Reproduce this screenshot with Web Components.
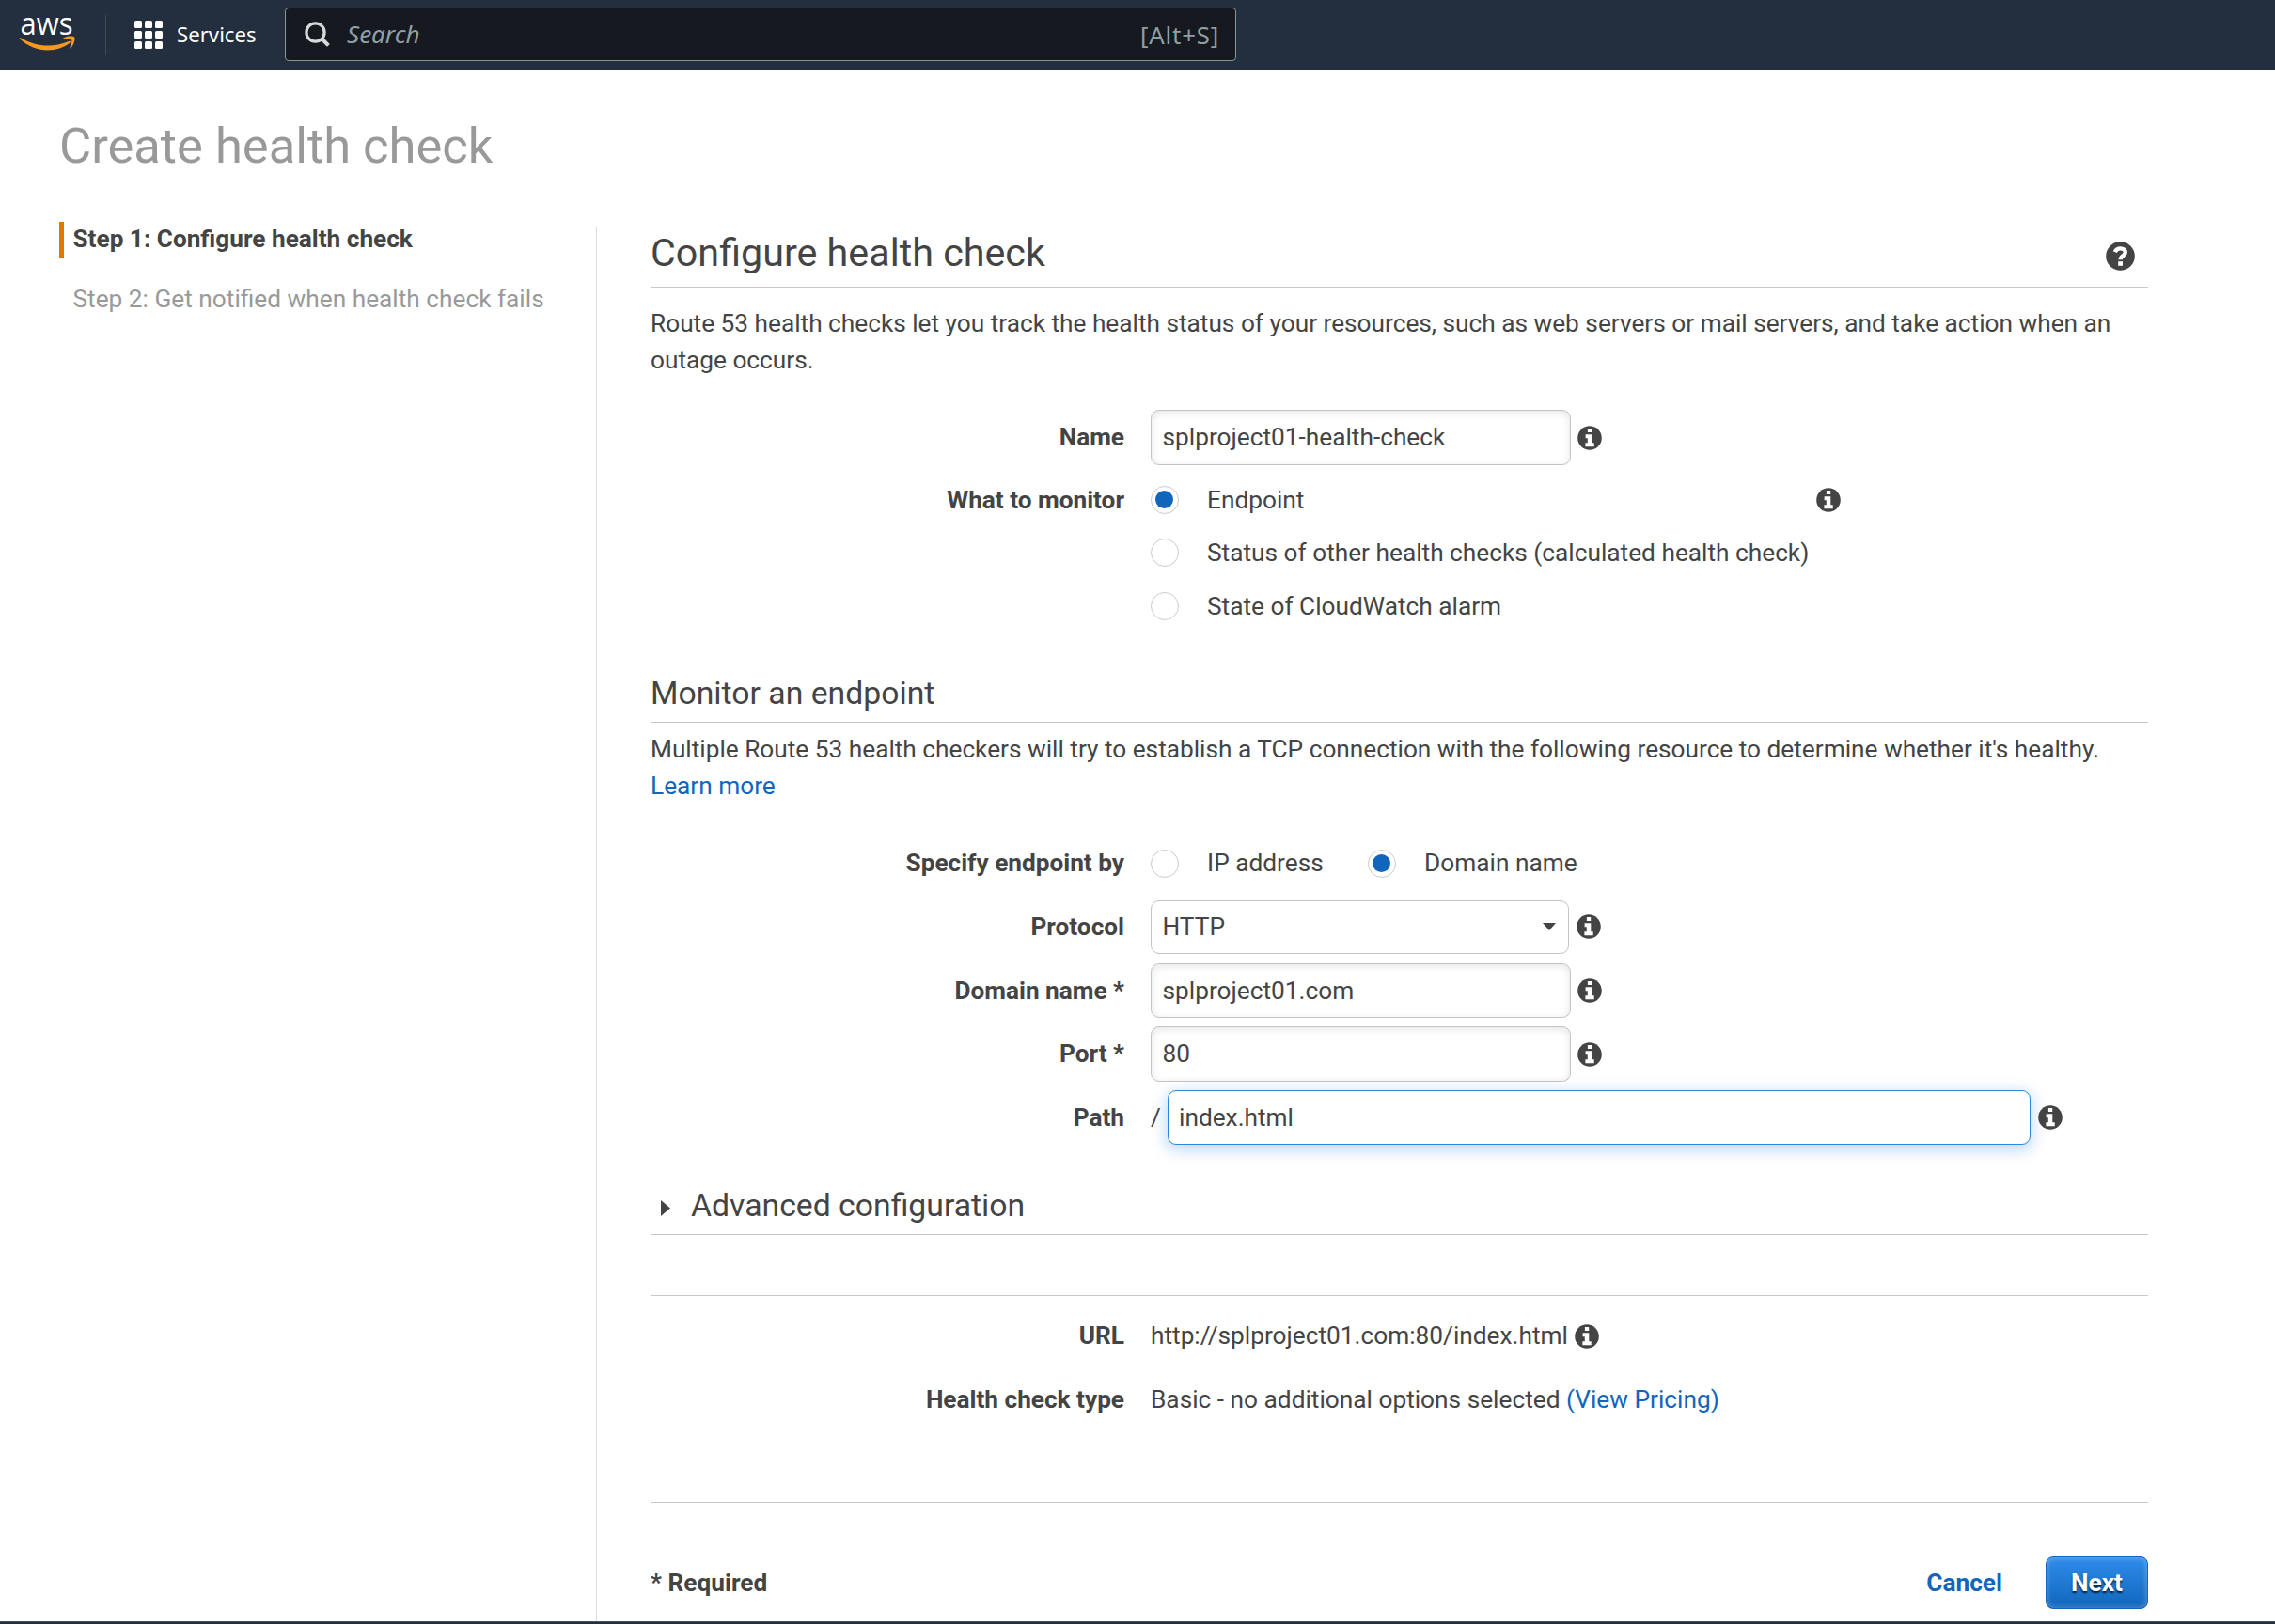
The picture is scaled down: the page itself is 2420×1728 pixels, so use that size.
<!DOCTYPE html>
<html lang="en">
<head>
<meta charset="utf-8">
<title>Create health check</title>
<style>
html, body { margin: 0; height: 100%; }
body { background: #fff; color: #444; font: 26.25px/39px Roboto, "Liberation Sans", sans-serif; overflow: hidden; }
</style>
</head>
<body>
<health-check-page></health-check-page>
<script>
const define = (name, html) => {
  const template = document.createElement('template');
  template.innerHTML = html;
  customElements.define(name, class extends HTMLElement {
    constructor() {
      super();
      this.attachShadow({ mode: 'open' }).append(template.content.cloneNode(true));
    }
  });
};

define('info-icon', `
<style>:host{display:block;width:26px;height:26px;flex:none}svg{display:block;width:100%;height:100%}</style>
<svg viewBox="0 0 26 26"><circle cx="13" cy="13" r="12.8" fill="#444"/><path fill="#fff" d="M10.9 2.9h4.3v4h-4.3zM8.6 9.3h6.7v9h2.4v3.9H8.4v-3.9h2.4v-5H8.6z"/></svg>`);

define('help-icon', `
<style>:host{display:block;width:31px;height:31px;flex:none}svg{display:block}</style>
<svg width="31" height="31" viewBox="0 0 31 31"><circle cx="15.5" cy="15.5" r="15.3" fill="#444"/><path fill="none" stroke="#fff" stroke-width="4.4" d="M9.8 11.1C10.8 8.8 13 7.4 15.6 7.4c3 0 5.2 1.6 5.2 4.2 0 3.8-5.2 3.7-5.2 7.7"/><path fill="#fff" d="M13.2 21.2h4.8v4.6h-4.8z"/></svg>`);

define('radio-option', `
<style>
:host{display:flex;align-items:center;height:30px;white-space:nowrap}
i{box-sizing:border-box;width:30px;height:30px;border:1.5px solid #ccc;border-radius:50%;background:#fff;flex:none;padding:4px}
:host([checked]) i::before{content:"";display:block;width:19px;height:19px;border-radius:50%;background:#1166bb}
span{margin-left:30px}
</style><i></i><span><slot></slot></span>`);

define('text-field', `
<style>
:host{box-sizing:border-box;display:flex;align-items:center;width:447px;height:59px;padding-left:11.5px;border:1.5px solid #c4c4c4;border-radius:9px;background:#fff;box-shadow:inset 0 2px 8px rgba(0,0,0,.11);flex:none}
:host([focused]){width:918px;height:58px;padding-left:11px;border-color:#2e86de;box-shadow:0 4px 16px 2px rgba(46,134,222,.3)}
:host([select]){width:445px;height:57px;box-shadow:none;justify-content:space-between;padding-right:13px}
svg{display:none}:host([select]) svg{display:block}
</style><span><slot></slot></span><svg width="14" height="8" viewBox="0 0 14 8"><path d="M0 0h14L7 8z" fill="#444"/></svg>`);

define('form-row', `
<style>
:host{display:flex;align-items:center;height:67px}
.label{width:504px;margin-right:28px;text-align:right;font-weight:700;font-size:26.2px;flex:none}
.value{display:flex;align-items:center}
</style><div class="label"><slot name="label"></slot></div><div class="value"><slot></slot></div>`);

define('section-heading', `
<style>
:host{box-sizing:border-box;display:flex;align-items:center;border-bottom:1px solid #c8c8c8;font-size:33.75px;height:64px;padding-top:2px}
:host([large]){font-size:41.25px;height:69px;padding-top:0}
</style><slot></slot>`);

define('top-bar', `
<style>
:host{box-sizing:border-box;display:flex;align-items:center;height:75px;padding-left:20px;background:#232f3e;border-bottom:1px solid #48535f;font-family:"Noto Sans","Open Sans",sans-serif}
svg{display:block;flex:none}
.rule{width:1px;height:43px;background:#414750;margin:0 30px 0 31px}
.services{font-size:22.2px;color:#fff;margin-left:15px;width:115px;padding-bottom:2px}
.search{box-sizing:border-box;display:flex;align-items:center;width:1012px;height:57px;border:1px solid #879596;border-radius:4px;background:#161920;color:#8fa0a4;padding:0 17px 0 20px;margin-bottom:1px}
.hint{font-style:italic;margin-left:18px;flex:1;font-size:26px}
.key{font-size:25.8px;letter-spacing:.8px;padding-top:1px}
</style>
<svg width="61" height="74" viewBox="0 -15 61 74" overflow="visible"><text x="1.5" y="22" textLength="56" lengthAdjust="spacingAndGlyphs" font-family="Open Sans" font-weight="500" font-size="33" fill="#fff">aws</text><path fill="#f7981f" d="M1 26.5c-.8-.9.2-1.6 1.2-1C18 34.4 35 36.5 53 29c1.500-.6 2.600.8 1.300 1.800C40 41.700 17 41.500 1 26.500z"/><path fill="#f7981f" d="M47 25.700c3.500-2.500 11-2.600 12.200-1.100 1.200 1.600-.5 8.500-3.800 11.500-.7.6-1.400.2-1-.6 1-2.300 2.500-6.900 1.800-7.900s-5.600-.9-8.500-.8c-.9 0-1.200-.6-.7-1.100z"/></svg>
<div class="rule"></div>
<svg width="30" height="30" viewBox="0 0 30 30" fill="#fff"><rect width="8" height="8" rx="1.500"/><rect x="11" width="8" height="8" rx="1.500"/><rect x="22" width="8" height="8" rx="1.500"/><rect y="11" width="8" height="8" rx="1.500"/><rect x="11" y="11" width="8" height="8" rx="1.500"/><rect x="22" y="11" width="8" height="8" rx="1.500"/><rect y="22" width="8" height="8" rx="1.500"/><rect x="11" y="22" width="8" height="8" rx="1.500"/><rect x="22" y="22" width="8" height="8" rx="1.500"/></svg>
<div class="services">Services</div>
<div class="search"><svg width="27" height="27" viewBox="0 0 27 27" fill="none" stroke="#d5dbdb" stroke-width="3.200"><circle cx="11.500" cy="11.500" r="9.600"/><path d="M18 18l7.400 7.400" stroke-width="4"/></svg><span class="hint">Search</span><span class="key">[Alt+S]</span></div>`);

define('wizard-step', `
<style>
:host{box-sizing:border-box;display:flex;align-items:center;height:38px;padding:0 0 2px 9.500px;border-left:5px solid transparent;color:#999;white-space:nowrap}
:host([active]){border-color:#e07700;color:#444;font-weight:700;font-size:26.2px}
</style><slot></slot>`);

define('primary-button', `
<style>
:host{box-sizing:border-box;display:flex;align-items:center;justify-content:center;width:109px;height:56px;border:1px solid #1166bb;border-radius:8px;background:linear-gradient(#2f8ceb,#1166bb);box-shadow:inset 0 0 6px rgba(255,255,255,.35);color:#fff;font-weight:700;text-shadow:0 2px 2px rgba(0,0,0,.75)}
</style><slot></slot>`);

define('health-check-page', `
<style>
:host{display:flex;flex-direction:column;height:100%;overflow:hidden}
h1,p{margin:0;font-weight:400}
h1{font-size:52.5px;line-height:60px;color:#999;margin:50px 0 0 63px}
.body{display:flex;flex:1;min-height:0}
nav{display:flex;flex-direction:column;gap:26px;width:571px;padding:51px 0 0 63px;flex:none}
main{border-left:1px solid #ddd;padding-left:57px;margin-top:57px;width:1593px;display:flex;flex-direction:column}
p{letter-spacing:-.01px}
a{color:#1166bb}
info-icon{margin-left:7px}
text-field[select] + info-icon,text-field[focused] + info-icon{margin-left:8px}
.end{justify-content:space-between;display:flex;flex:1;align-items:center;padding:0 14px 4px 0}
.rule{height:1px;background:#c8c8c8;flex:none}
.monitor{display:flex;align-items:center}
.footer{display:flex;align-items:center;font-weight:700;height:56px}
.footer span{flex:1}
.footer a{margin-right:46px}
.bottom{height:2px;background:#232f3e;border-top:1px solid #48535f;flex:none}
</style>
<top-bar></top-bar>
<h1>Create health check</h1>
<div class="body">
<nav><wizard-step active>Step 1: Configure health check</wizard-step><wizard-step>Step 2: Get notified when health check fails</wizard-step></nav>
<main>
<section-heading large style="margin-top:-5px"><span class="end"><span>Configure health check</span><help-icon style="margin-top:7px"></help-icon></span></section-heading>
<p style="margin-top:19px">Route 53 health checks let you track the health status of your resources, such as web servers or mail servers, and take action when an outage occurs.</p>
<form-row style="margin-top:29px"><span slot="label">Name</span><text-field>splproject01-health-check</text-field><info-icon></info-icon></form-row>
<form-row style="height:66px"><span slot="label">What to monitor</span><div class="monitor"><radio-option checked style="width:701px">Endpoint</radio-option><info-icon></info-icon></div></form-row>
<form-row style="height:46px"><radio-option>Status of other health checks (calculated health check)</radio-option></form-row>
<form-row style="height:68px"><radio-option>State of CloudWatch alarm</radio-option></form-row>
<section-heading style="margin-top:26px">Monitor an endpoint</section-heading>
<p style="margin-top:9px">Multiple Route 53 health checkers will try to establish a TCP connection with the following resource to determine whether it's healthy.<br><a>Learn more</a></p>
<form-row style="margin-top:29px"><span slot="label">Specify endpoint by</span><radio-option style="width:231px">IP address</radio-option><radio-option checked>Domain name</radio-option></form-row>
<form-row style="height:68px"><span slot="label">Protocol</span><text-field select>HTTP</text-field><info-icon></info-icon></form-row>
<form-row style="height:68px"><span slot="label">Domain name *</span><text-field style="height:58px">splproject01.com</text-field><info-icon></info-icon></form-row>
<form-row><span slot="label">Port *</span><text-field>80</text-field><info-icon></info-icon></form-row>
<form-row style="height:68px"><span slot="label">Path</span><span style="width:18px">/</span><text-field focused>index.html</text-field><info-icon></info-icon></form-row>
<section-heading style="margin-top:27px"><svg width="10" height="17" viewBox="0 0 10 17" style="margin:5px 22px 0 11px"><path d="M0 0l10 8.500L0 17z" fill="#444"/></svg>Advanced configuration</section-heading>
<div class="rule" style="margin-top:64px"></div>
<form-row style="margin-top:9px"><span slot="label">URL</span>http://splproject01.com:80/index.html<info-icon></info-icon></form-row>
<form-row style="height:68px"><span slot="label">Health check type</span><span>Basic - no additional options selected <a>(View Pricing)</a></span></form-row>
<div class="rule" style="margin-top:75px"></div>
<div class="footer" style="margin-top:57px"><span>* Required</span><a>Cancel</a><primary-button>Next</primary-button></div>
</main>
</div>
<div class="bottom"></div>`);
</script>
</body>
</html>
